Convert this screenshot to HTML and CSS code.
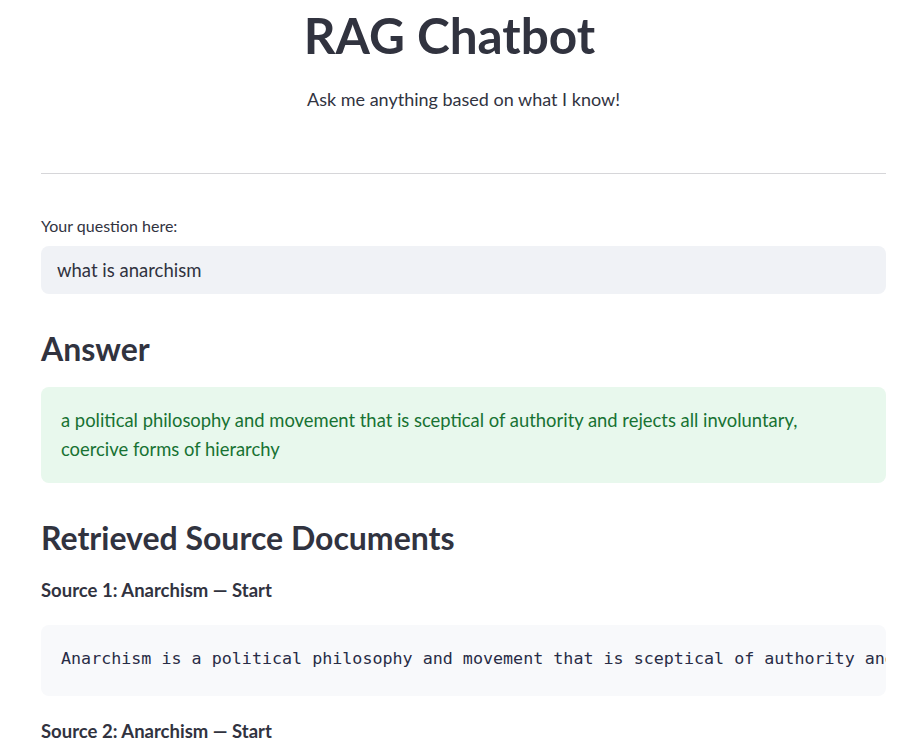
FILE: index.html
```html
<!DOCTYPE html>
<html lang="en">
<head>
<meta charset="utf-8">
<title>RAG Chatbot</title>
<link rel="stylesheet" href="styles.css">
</head>
<body>
<main class="main">
  <h1 class="title">RAG Chatbot</h1>
  <p class="subtitle">Ask me anything based on what I know!</p>
  <hr class="divider">
  <label class="field-label" for="q">Your question here:</label>
  <div class="input-box"><input id="q" class="input" type="text" value="what is anarchism"></div>
  <h3 class="heading heading-answer">Answer</h3>
  <div class="success">a political philosophy and movement that is sceptical of authority and rejects all involuntary,<br>coercive forms of hierarchy</div>
  <h3 class="heading heading-sources">Retrieved Source Documents</h3>
  <p class="source-label">Source 1: Anarchism — Start</p>
  <pre class="code">Anarchism is a political philosophy and movement that is sceptical of authority and rejects all involuntary, coercive forms of hierarchy.</pre>
  <p class="source-label source-label-2">Source 2: Anarchism — Start</p>
</main>
</body>
</html>
```
FILE: styles.css
```css
html, body {
  margin: 0;
  padding: 0;
  background: #ffffff;
}
body {
  font-family: Lato, "Open Sans", sans-serif;
  color: rgb(49, 51, 63);
  overflow: hidden;
}
.main {
  width: 845px;
  margin-left: 41px;
  padding-top: 5px;
  display: flex;
  flex-direction: column;
}
.title {
  margin: 0;
  font-size: 49.5px;
  line-height: 60px;
  font-weight: 700;
  text-align: center;
  padding-right: 28px;
}
.subtitle {
  margin: 21px 0 0;
  font-size: 18px;
  line-height: 27px;
  text-align: center;
}
.divider {
  margin: 60px 0 0;
  border: 0;
  border-top: 1px solid rgb(214, 214, 217);
  height: 0;
}
.field-label {
  margin-top: 42px;
  font-size: 16px;
  line-height: 20px;
}
.input-box {
  margin-top: 10px;
  height: 48px;
  background: rgb(240, 242, 246);
  border-radius: 8px;
  display: flex;
  align-items: center;
}
.input {
  border: 0;
  background: transparent;
  outline: none;
  font-family: inherit;
  font-size: 18.5px;
  color: rgb(49, 51, 63);
  padding: 0 16px;
  width: 100%;
}
.heading {
  margin: 0;
  font-size: 32px;
  line-height: 42px;
  font-weight: 700;
}
.heading-answer {
  margin-top: 34px;
}
.success {
  margin-top: 17px;
  background: rgb(232, 248, 237);
  color: rgb(23, 114, 51);
  border-radius: 8px;
  padding: 19px 20px;
  font-size: 18.4px;
  line-height: 29px;
}
.heading-sources {
  margin-top: 34px;
}
.source-label {
  margin: 18px 0 0;
  font-size: 18.5px;
  line-height: 27px;
  font-weight: 700;
}
.code {
  margin: 21px 0 0;
  background: rgb(248, 249, 251);
  border-radius: 8px;
  padding: 21px 20px 26px;
  font-family: "DejaVu Sans Mono", monospace;
  font-size: 16.7px;
  line-height: 24px;
  color: rgb(40, 44, 70);
  white-space: pre;
  overflow: hidden;
}
.source-label-2 {
  margin-top: 22px;
}
```
